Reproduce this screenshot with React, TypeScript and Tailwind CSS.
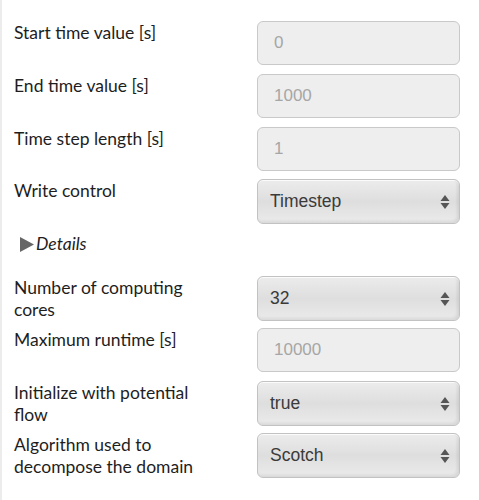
import React from "react";

type Row =
  | { kind: "input"; label: string; value: string }
  | { kind: "select"; label: string; value: string };

const TOP: Row[] = [
  { kind: "input", label: "Start time value [s]", value: "0" },
  { kind: "input", label: "End time value [s]", value: "1000" },
  { kind: "input", label: "Time step length [s]", value: "1" },
  { kind: "select", label: "Write control", value: "Timestep" },
];

const BOTTOM: Row[] = [
  { kind: "select", label: "Number of computing cores", value: "32" },
  { kind: "input", label: "Maximum runtime [s]", value: "10000" },
  { kind: "select", label: "Initialize with potential flow", value: "true" },
  { kind: "select", label: "Algorithm used to decompose the domain", value: "Scotch" },
];

function Arrows() {
  return (
    <svg width="10" height="16" viewBox="0 0 10 16" className="shrink-0">
      <path d="M5 1 L9.5 7 L0.5 7 Z" fill="#555" />
      <path d="M5 15 L9.5 9 L0.5 9 Z" fill="#555" />
    </svg>
  );
}

function Control({ row }: { row: Row }) {
  if (row.kind === "input") {
    return (
      <div className="w-[203px] h-[44px] rounded-[6px] border border-[#c9c9c9] bg-[#eeeeee] flex items-center pl-[16px] text-[17px] text-[#a6a6a6] font-['Liberation_Sans',sans-serif]">
        {row.value}
      </div>
    );
  }
  return (
    <div className="w-[203px] h-[45px] rounded-[6px] border border-[#c2c2c2] bg-gradient-to-b from-[#ececec] via-[#dedede] to-[#ebebeb] shadow-[inset_-2px_-2px_3px_rgba(0,0,0,0.08),inset_0_1px_0_rgba(255,255,255,0.8)] flex items-center justify-between pl-[12px] pr-[9px] text-[17.5px] text-[#3a3a3a] font-['Liberation_Sans',sans-serif]">
      <span>{row.value}</span>
      <Arrows />
    </div>
  );
}

function FormRow({ row, className }: { row: Row; className?: string }) {
  return (
    <div className={"flex items-start " + (className ?? "")}>
      <div className="w-[243px] pr-[48px] text-[17.5px] leading-[22px] pt-[1px] text-[#1e1e1e]">{row.label}</div>
      <Control row={row} />
    </div>
  );
}

export default function App() {
  return (
    <div className="w-[479px] h-[500px] bg-white border-l-2 border-[#ececec] font-['Lato',sans-serif] overflow-hidden">
      <div className="pl-[12px] pt-[21px] flex flex-col">
        <FormRow row={TOP[0]} className="mb-[9px]" />
        <FormRow row={TOP[1]} className="mb-[9px]" />
        <FormRow row={TOP[2]} className="mb-[8px]" />
        <FormRow row={TOP[3]} />
        <div className="flex items-center h-[52px] pb-[12px] pl-[6px] text-[17.5px] leading-[22px] italic text-[#1e1e1e]">
          <svg width="14" height="15" viewBox="0 0 14 15" className="mr-[2px]">
            <path d="M0 0 L14 7.5 L0 15 Z" fill="#666" />
          </svg>
          Details
        </div>
        <FormRow row={BOTTOM[0]} className="mb-[7px]" />
        <FormRow row={BOTTOM[1]} className="mb-[9px]" />
        <FormRow row={BOTTOM[2]} className="mb-[7px]" />
        <FormRow row={BOTTOM[3]} />
      </div>
    </div>
  );
}
